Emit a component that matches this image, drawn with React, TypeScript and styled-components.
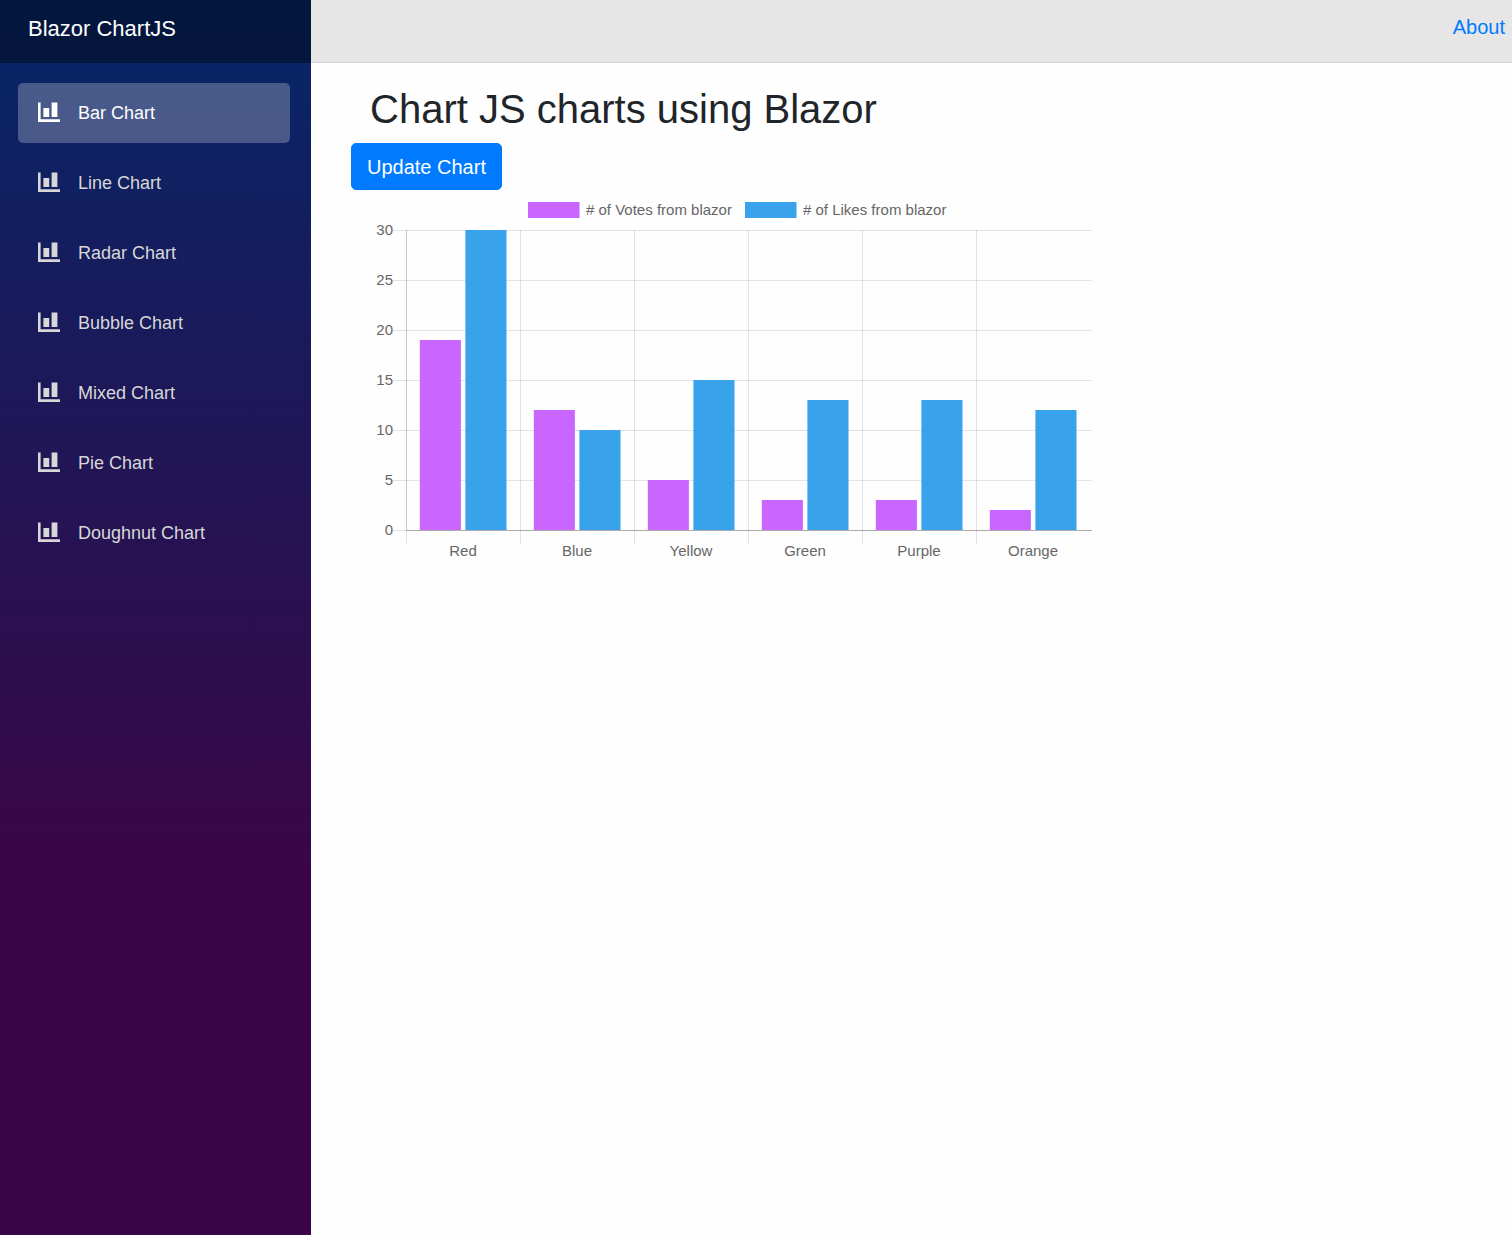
import React, { useState } from "react";
import styled, { createGlobalStyle } from "styled-components";

const GlobalStyle = createGlobalStyle`
  *, *::before, *::after { box-sizing: border-box; }
  body {
    margin: 0;
    background: #fefefe;
    color: #212529;
    font-family: "Liberation Sans", Arial, Helvetica, sans-serif;
    font-size: 20px;
    line-height: 30px;
  }
`;

const Page = styled.div`
  display: flex;
  min-height: 100vh;
`;

const Sidebar = styled.aside`
  flex: 0 0 311px;
  background: linear-gradient(180deg, rgb(5, 39, 103) 0%, #3a0647 70%);
`;

const BrandBar = styled.div`
  display: flex;
  align-items: center;
  height: 63px;
  padding: 0 28px 6px;
  background: rgba(0, 0, 0, 0.4);
`;

const Brand = styled.a`
  color: #fff;
  font-size: 22px;
  text-decoration: none;
`;

const NavList = styled.ul`
  display: flex;
  flex-direction: column;
  gap: 10px;
  margin: 0;
  padding: 20px 21px 20px 18px;
  list-style: none;
`;

const NavLink = styled.a<{ $active: boolean }>`
  display: flex;
  align-items: center;
  gap: 18px;
  height: 60px;
  padding: 0 20px;
  border-radius: 5px;
  font-size: 18px;
  text-decoration: none;
  color: ${(p) => (p.$active ? "#fff" : "#d7d7d7")};
  background: ${(p) => (p.$active ? "rgba(255, 255, 255, 0.25)" : "transparent")};
`;

const NavIcon = styled.svg`
  flex: none;
  width: 22px;
  height: 22px;
  fill: currentColor;
`;

const Main = styled.div`
  flex: 1;
  min-width: 0;
`;

const TopRow = styled.header`
  display: flex;
  justify-content: flex-end;
  align-items: center;
  height: 63px;
  padding: 0 7px 8px;
  background: #e6e6e6;
  border-bottom: 1px solid #d6d5d5;
`;

const TopLink = styled.a`
  color: #007bff;
  text-decoration: none;
`;

const Content = styled.main`
  padding: 22px 40px 0;
`;

const Title = styled.h1`
  margin: 0 0 10px;
  padding-left: 19px;
  font-size: 40px;
  font-weight: 400;
  line-height: 48px;
`;

const PrimaryButton = styled.button`
  display: block;
  padding: 8px 15px 7px;
  border: 1px solid #007bff;
  border-radius: 5px;
  background: #007bff;
  color: #fff;
  font: inherit;
  line-height: 30px;
  cursor: pointer;
`;

const ChartCanvas = styled.svg`
  display: block;
  width: 100%;
  max-width: 750px;
  height: auto;
  font-size: 15px;
  fill: #666;
`;

const pages = ["Bar Chart", "Line Chart", "Radar Chart", "Bubble Chart", "Mixed Chart", "Pie Chart", "Doughnut Chart"];

const labels = ["Red", "Blue", "Yellow", "Green", "Purple", "Orange"];
const series = [
  { name: "# of Votes from blazor", color: "#c966ff", values: [19, 12, 5, 3, 3, 2], legendX: 177 },
  { name: "# of Likes from blazor", color: "#38a2eb", values: [30, 10, 15, 13, 13, 12], legendX: 394 },
];

const plot = { left: 55, right: 741, top: 40, bottom: 340 };
const step = 114;
const ticks = [0, 5, 10, 15, 20, 25, 30];
const yOf = (value: number) => plot.bottom - value * 10;

function BarChart() {
  return (
    <ChartCanvas viewBox="0 0 750 375" role="img" aria-label="Votes and likes by colour">
      {series.map((s) => (
        <g key={s.name}>
          <rect x={s.legendX} y={12} width={51.5} height={16} fill={s.color} />
          <text x={s.legendX + 58} y={25}>{s.name}</text>
        </g>
      ))}
      {ticks.map((t) => (
        <g key={t}>
          <rect x={42} y={yOf(t)} width={plot.right - 42} height={1} fill="#000" fillOpacity={0.1} />
          <text x={42} y={yOf(t) + 5} textAnchor="end">{t}</text>
        </g>
      ))}
      {labels.map((label, i) => {
        const x = plot.left + i * step;
        return (
          <g key={label}>
            <rect x={x} y={plot.top} width={1} height={314} fill="#000" fillOpacity={0.1} />
            <text x={x + step / 2} y={366} textAnchor="middle">{label}</text>
          </g>
        );
      })}
      <rect x={plot.left} y={plot.top} width={1} height={300} fill="#000" fillOpacity={0.12} />
      {series.map((s, n) =>
        s.values.map((v, i) => (
          <rect
            key={`${n}-${i}`}
            x={plot.left + i * step + 13.8 + n * 45.6}
            y={yOf(v)}
            width={41.1}
            height={v * 10}
            fill={s.color}
          />
        ))
      )}
      <rect x={plot.left} y={plot.bottom} width={plot.right - plot.left} height={1} fill="#000" fillOpacity={0.25} />
    </ChartCanvas>
  );
}

export default function App() {
  const [active, setActive] = useState(0);
  return (
    <Page>
      <GlobalStyle />
      <Sidebar>
        <BrandBar>
          <Brand href="#">Blazor ChartJS</Brand>
        </BrandBar>
        <nav>
          <NavList>
            {pages.map((page, i) => (
              <li key={page}>
                <NavLink href="#" $active={i === active} onClick={() => setActive(i)}>
                  <NavIcon viewBox="0 0 22 22" aria-hidden="true">
                    <path d="M0 .4v19.6h22v-2.8h-19.4v-16.8zM13.6.4v14.6h5.8v-14.6zM5.4 6v9h5.8v-9z" />
                  </NavIcon>
                  {page}
                </NavLink>
              </li>
            ))}
          </NavList>
        </nav>
      </Sidebar>
      <Main>
        <TopRow>
          <TopLink href="#">About</TopLink>
        </TopRow>
        <Content>
          <Title>Chart JS charts using Blazor</Title>
          <PrimaryButton type="button">Update Chart</PrimaryButton>
          <BarChart />
        </Content>
      </Main>
    </Page>
  );
}
